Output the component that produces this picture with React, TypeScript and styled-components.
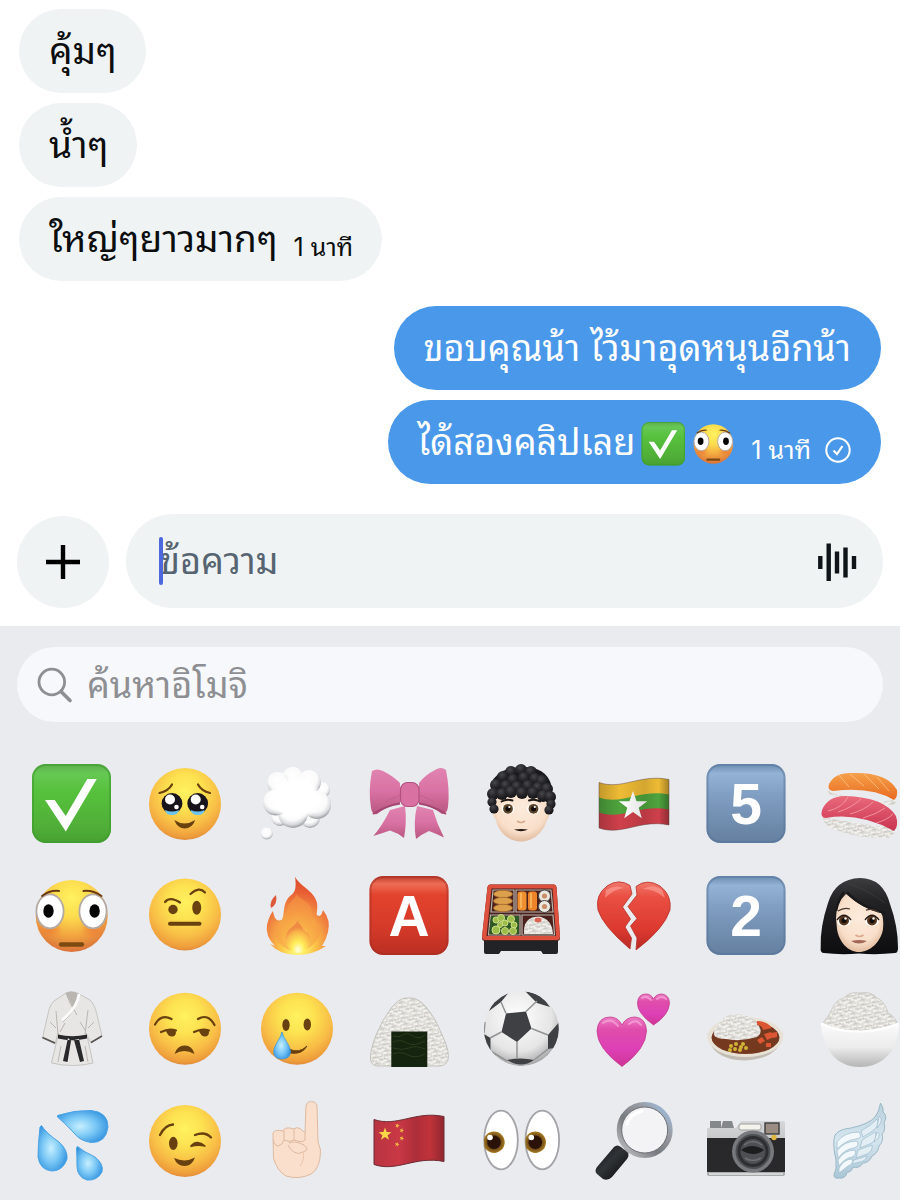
import React from 'react';
import styled, { createGlobalStyle } from 'styled-components';

const GlobalStyle = createGlobalStyle`
  *, *::before, *::after { box-sizing: border-box; }
  body {
    margin: 0;
    background: #ffffff;
    font-family: Inter, "Noto Sans Thai Looped", "Noto Sans Thai", Loma, "Liberation Sans", sans-serif;
  }
  button, input { font: inherit; }
`;

const Screen = styled.div`
  display: flex;
  flex-direction: column;
  min-height: 100vh;
  overflow: hidden;
`;

const Thread = styled.main`
  display: flex;
  flex-direction: column;
  gap: 25px;
  padding: 9px 19px 0;
`;

const Group = styled.section<{ $mine?: boolean }>`
  display: flex;
  flex-direction: column;
  align-items: ${(p) => (p.$mine ? 'flex-end' : 'flex-start')};
  gap: 10px;
`;

const Bubble = styled.div<{ $mine?: boolean }>`
  display: flex;
  align-items: center;
  gap: 16px;
  height: 84px;
  padding: 0 ${(p) => (p.$mine ? '30px' : '29px')} 0 30px;
  border-radius: 42px;
  white-space: nowrap;
  font-size: ${(p) => (p.$mine ? '36px' : '37px')};
  line-height: 48px;
  color: ${(p) => (p.$mine ? '#ffffff' : '#0b0d0f')};
  background: ${(p) => (p.$mine ? '#4a98e9' : '#eff3f4')};
`;

const MessageText = styled.span`
  display: flex;
  align-items: center;
  gap: 6px;
`;

const InlineEmoji = styled.svg`
  width: 44px;
  height: 44px;
  margin-top: 4px;
`;

const Meta = styled.span`
  display: flex;
  align-items: center;
  gap: 14px;
  padding-top: 16px;
  font-size: 25px;
  line-height: 32px;
`;

const Composer = styled.form`
  display: flex;
  align-items: flex-end;
  gap: 17px;
  padding: 30px 17px 18px;
`;

const RoundButton = styled.button`
  display: grid;
  place-items: center;
  flex: none;
  width: 92px;
  height: 92px;
  padding: 0;
  border: 0;
  border-radius: 50%;
  background: #eff3f4;
`;

const MessageField = styled.div`
  position: relative;
  display: flex;
  align-items: center;
  flex: 1;
  height: 94px;
  padding: 0 26px 0 34px;
  border-radius: 47px;
  background: #eff3f4;
`;

const Caret = styled.span`
  position: absolute;
  left: 33px;
  top: 23px;
  width: 4px;
  height: 48px;
  border-radius: 2px;
  background: #4c68dc;
`;

const TextInput = styled.input<{ $tone: string }>`
  flex: 1;
  min-width: 0;
  height: 60px;
  padding: 0;
  border: 0;
  outline: 0;
  background: transparent;
  font-size: 36px;
  color: #0f1419;
  &::placeholder { color: ${(p) => p.$tone}; opacity: 1; }
`;

const IconButton = styled.button`
  display: grid;
  place-items: center;
  width: 40px;
  height: 40px;
  padding: 0;
  border: 0;
  background: transparent;
`;

const Keyboard = styled.section`
  flex: 1;
  padding: 21px 0 16px;
  overflow: hidden;
  background: #eaebef;
`;

const SearchField = styled.label`
  display: flex;
  align-items: center;
  gap: 14px;
  height: 75px;
  margin: 0 17px;
  padding: 0 20px;
  border-radius: 38px;
  background: #f6f8fc;
`;

const EmojiGrid = styled.div`
  display: grid;
  grid-template-columns: repeat(8, 1fr);
  grid-auto-rows: 112px;
  margin: 26px -15px 0 15px;
`;

const EmojiButton = styled.button`
  display: grid;
  place-items: center;
  padding: 0;
  border: 0;
  background: transparent;
`;

const EmojiSvg = styled.svg`
  width: 80px;
  height: 80px;
  overflow: visible;
`;

const SharedDefs = styled.svg`
  position: absolute;
  width: 0;
  height: 0;
`;

type Stop = [number, string];
const stops = (list: Stop[]) => list.map(([o, c]) => <stop key={o} offset={o} stopColor={c} />);

function Defs() {
  const vertical = (id: string, list: Stop[]) => (
    <linearGradient id={id} x1="0" y1="0" x2="0" y2="1">{stops(list)}</linearGradient>
  );
  const radial = (id: string, cx: number, cy: number, r: number, list: Stop[]) => (
    <radialGradient id={id} cx={cx} cy={cy} r={r}>{stops(list)}</radialGradient>
  );
  return (
    <SharedDefs aria-hidden="true">
      <defs>
        {radial('face', 0.5, 0.33, 0.68, [[0, '#fff160'], [0.35, '#fde250'], [0.7, '#f8bd46'], [0.92, '#ee9d3b'], [1, '#dd873b']])}
        {radial('flushed', 0.5, 0.25, 0.76, [[0, '#fff160'], [0.35, '#fcdc4e'], [0.68, '#f3a740'], [1, '#d9703a']])}
        {radial('blush', 0.5, 0.5, 0.5, [[0, '#ee7a35c0'], [1, '#ee7a3500']])}
        {vertical('green', [[0, '#5fae4d'], [0.12, '#66c854'], [0.35, '#56c13c'], [0.8, '#50ae38'], [1, '#47a030']])}
        {vertical('blue', [[0, '#6c8cb0'], [0.12, '#93b2d4'], [0.4, '#809ec2'], [1, '#647f9f']])}
        {vertical('red', [[0, '#b93a2b'], [0.1, '#ee6d55'], [0.24, '#e2432d'], [0.65, '#d53a29'], [1, '#b92f22']])}
        {vertical('heart', [[0, '#f1786c'], [0.22, '#e94f42'], [0.7, '#dc392f'], [1, '#b82a25']])}
        {vertical('pinkHeart', [[0, '#ee7dc5'], [0.25, '#e04dab'], [0.65, '#dd40b6'], [1, '#cf3494']])}
        {radial('puff', 0.46, 0.36, 0.62, [[0, '#ffffff'], [0.62, '#fafafb'], [0.85, '#dadbde'], [1, '#a3a5aa']])}
        {radial('core', 0.5, 0.5, 0.5, [[0, '#ffffff'], [0.75, '#ffffff'], [1, '#ffffff00']])}
        {radial('curl', 0.4, 0.3, 0.7, [[0, '#48474c'], [0.5, '#29282c'], [1, '#131316']])}
        {radial('skin', 0.5, 0.4, 0.62, [[0, '#fdebdc'], [0.7, '#f9dfca'], [1, '#deb79a']])}
        {vertical('bow', [[0, '#e184b1'], [0.5, '#d972a4'], [1, '#b9567f']])}
        {radial('fire', 0.5, 0.88, 0.85, [[0, '#ffffd0'], [0.14, '#fff16a'], [0.32, '#fbc548'], [0.56, '#f28e42'], [0.8, '#e95f35'], [1, '#dd4a2c']])}
        {radial('flame', 0.5, 0.9, 0.7, [[0, '#ffffe0'], [0.35, '#ffee5a'], [0.8, '#f9b54a'], [1, '#f08b45']])}
        {radial('water', 0.45, 0.5, 0.62, [[0, '#c6efff'], [0.5, '#79c7f5'], [1, '#2c8edd']])}
        {vertical('hair', [[0, '#3d3d3f'], [0.3, '#232325'], [1, '#0d0d0f']])}
        {radial('ball', 0.45, 0.35, 0.65, [[0, '#ffffff'], [0.7, '#e5e5e6'], [1, '#a9a9ab']])}
        {vertical('bowl', [[0, '#fbfbfb'], [0.55, '#ececec'], [1, '#b5b5b5']])}
        {vertical('silver', [[0, '#d5d7d9'], [1, '#a7a9ab']])}
        {vertical('wing', [[0, '#b9d0dc'], [0.5, '#d6e6ef'], [1, '#a9c5d4']])}
        {vertical('tuna', [[0, '#ea6a7b'], [1, '#c93350']])}
        {vertical('salmon', [[0, '#f5a14b'], [1, '#e8691f']])}
        {radial('iris', 0.5, 0.5, 0.5, [[0, '#2b1208'], [0.58, '#2b1208'], [0.68, '#76501a'], [1, '#a97c22']])}
        <linearGradient id="chinaRed">{stops([[0, '#b83440'], [0.35, '#c93845'], [0.6, '#ad2e39'], [0.8, '#c13239'], [1, '#8e2730']])}</linearGradient>
        <linearGradient id="wave">{stops([[0, '#00000030'], [0.3, '#00000000'], [0.65, '#0000001c'], [0.85, '#00000000'], [1, '#00000050']])}</linearGradient>
        <linearGradient id="ring" x1="1" y1="0" x2="0" y2="1">{stops([[0, '#9fc4ee'], [0.3, '#9a9da3'], [0.6, '#777a7f'], [1, '#c7c9cc']])}</linearGradient>
        <linearGradient id="handle" x1="0" y1="0" x2="1" y2="1">{stops([[0, '#0b0c0e'], [0.45, '#303438'], [1, '#050606']])}</linearGradient>
        <clipPath id="ballEdge"><circle cx="40.3" cy="40.7" r="37.5" /></clipPath>
        <pattern id="grain" width="12" height="11" patternUnits="userSpaceOnUse" patternTransform="rotate(-12)">
          <rect width="12" height="11" fill="#dfddd8" />
          <path d="M0 2q2-2 4 0M6 1q2 2 4 1M2 5q2 2 4 0M8 5q1-2 4 0M0 8q2 1 3-1M5 8q2-2 4 1M9 10l3-2" stroke="#f6f5f2" strokeWidth="1.7" fill="none" />
          <path d="M1 3q2-1 4 1M6 3q2 2 5 0M0 6q3 2 5 1M7 7q2-1 4 0M2 10q2-1 4 0" stroke="#b4b1aa" strokeWidth=".7" fill="none" />
        </pattern>
      </defs>
    </SharedDefs>
  );
}

const brown = '#69400f';
const Head = ({ cy = 40 }: { cy?: number }) => <circle cx="41" cy={cy} r="36" fill="url(#face)" />;

const Check = () => (
  <>
    <rect x="1" width="79" height="79" rx="14" fill="url(#green)" />
    <rect x="2" y="1" width="77" height="77" rx="13" fill="none" stroke="#3e9b2f" strokeWidth="2" opacity=".6" />
    <path d="M14 36h9.7l11 16L56.3 15h9.5L34.8 67.4z" fill="#fff" />
  </>
);

const Flushed = () => (
  <>
    <circle cx="40.7" cy="40" r="36" fill="url(#flushed)" />
    <ellipse cx="19" cy="54" rx="13" ry="9" fill="url(#blush)" />
    <ellipse cx="62" cy="54" rx="13" ry="9" fill="url(#blush)" />
    <ellipse cx="19" cy="35.3" rx="13.6" ry="17" fill="#fff" stroke="#b3a9a2" strokeWidth="1.8" />
    <ellipse cx="62" cy="35.3" rx="13.6" ry="17" fill="#fff" stroke="#b3a9a2" strokeWidth="1.8" />
    <ellipse cx="17.5" cy="35" rx="5.2" ry="6.8" fill="#050505" />
    <ellipse cx="63.6" cy="35" rx="5.2" ry="6.8" fill="#050505" />
    <path d="M11 20q8-6 17-5M52.5 15q9-1 18 5" fill="none" stroke="#6b3a10" strokeWidth="2" strokeLinecap="round" />
    <path d="M30 68.5h21" stroke="#7d4a12" strokeWidth="4.3" strokeLinecap="round" />
  </>
);

const HoldingTears = () => (
  <>
    <Head />
    {[28, 53.7].map((x) => (
      <g key={x}>
        <circle cx={x} cy="39.5" r="10.4" fill="#17151b" />
        <path d={`M${x - 7} 46q7 3 14 0q-1 5-7 5t-7-5`} fill="#6cc4ee" />
        <circle cx={x - 2} cy="35.5" r="5" fill="#fff" />
        <circle cx={x + 4.5} cy="43" r="2.3" fill="#fff" />
      </g>
    ))}
    <path d="M15.5 29q9-2 12.5-8.5M54 20.5Q57.5 27 66 29" fill="none" stroke={brown} strokeWidth="2.2" strokeLinecap="round" />
    <path d="M30.3 56q10 7 21 0Q48 64.5 40.7 64.5T30.3 56" fill={brown} />
  </>
);

const Thought = () => (
  <>
    {[[66, 26, 8], [24, 53, 9], [54, 54, 10], [37, 14, 11], [22, 19, 11], [53, 18, 12], [37, 49, 15], [61, 41, 14], [20, 38.5, 13]].map(([x, y, r]) => (
      <circle key={`${x}-${y}`} cx={x} cy={y} r={r} fill="url(#puff)" />
    ))}
    <ellipse cx="39" cy="34" rx="28" ry="23" fill="url(#core)" />
    <circle cx="10.7" cy="69.5" r="6" fill="url(#puff)" />
  </>
);

const Bow = () => (
  <>
    <path d="M21 46Q13 62 4.3 72Q14 69 21 66.5Q29 69 35 74Q38 58 36 42zM48 42Q44 58 47 75Q53 70 60 67Q68 70 75 73.5Q68 60 64 46z" fill="url(#bow)" />
    <path d="M3 7Q8 4 14 7Q24 12 31 19V39Q18 42 8 50Q3 51 2 44Q-1 27 3 7M77 6Q72 2 66 6Q56 11 50 19V39Q63 42 73 50Q78 50 79 43Q81 26 77 6" fill="url(#bow)" />
    <path d="M16 38Q24 33 32 31M66 38Q58 33 49 31" fill="none" stroke="#c2628f" strokeWidth="1.2" />
    <path d="M4 50Q16 42 31 39.5M77 50Q65 42 50 39.5" fill="none" stroke="#a44672" strokeWidth="1.8" />
    <rect x="31.5" y="18.5" width="18.5" height="24" rx="7" fill="#d971a3" stroke="#b3527f" strokeWidth="1.2" />
  </>
);

const curls = [
  [30, 8], [40, 6], [50, 8], [22, 13], [32, 16], [43, 14], [54, 15], [61, 17], [15, 21], [25, 22], [36, 23], [47, 22], [57, 24], [66, 25],
  [12, 30], [21, 30], [30, 28], [41, 29], [52, 29], [62, 32], [69, 33], [11, 38], [70, 40], [13, 45], [68, 46],
];

const CurlyPerson = () => (
  <>
    <path d="M12 44Q9 20 40 21Q71 20 69 44Q69 52 66 56C63 68 52 77.5 40 77.5S17 68 15 56Q12 53 12 44" fill="url(#skin)" />
    <path d="M10 20Q16 4 40 3T70 20L69 33Q55 25 40 26T12 33z" fill="#19191c" />
    {curls.map(([x, y]) => <circle key={`${x}-${y}`} cx={x} cy={y} r={y > 35 ? 4.6 : 6} fill="url(#curl)" />)}
    {[27, 52.5].map((x) => (
      <g key={x}>
        <ellipse cx={x} cy="44.8" rx="6.5" ry="5.3" fill="#fff" />
        <circle cx={x} cy="44.8" r="4.9" fill="#5c452b" />
        <circle cx={x} cy="44.8" r="2.6" fill="#100c09" />
        <circle cx={x + 1.3} cy="43" r="1.1" fill="#fff" />
      </g>
    ))}
    <path d="M20.5 37.5q5-3 11-1M48 36.5q6-2 11 1" fill="none" stroke="#1c1816" strokeWidth="1.9" strokeLinecap="round" />
    <path d="M36 57q4 3 8 0" fill="none" stroke="#d9a98c" strokeWidth="1.6" />
    <path d="M33 65.5q7-1 14 0q-7 3.5-14 0" fill="#231613" />
  </>
);

const star = (cx: number, cy: number, outer: number, inner = outer * 0.4, turn = 0) =>
  Array.from({ length: 10 }, (_, i) => {
    const a = -Math.PI / 2 + (i * Math.PI) / 5 + turn;
    const r = i % 2 ? inner : outer;
    return `${(cx + r * Math.cos(a)).toFixed(2)},${(cy + r * Math.sin(a)).toFixed(2)}`;
  }).join(' ');

const band = (y: number, h: number) =>
  `M5 ${y}C28 ${y + 8} 46 ${y - 9} 75 ${y - 3}V${y + h - 3}C46 ${y + h - 9} 28 ${y + h + 8} 5 ${y + h}z`;

const Myanmar = () => (
  <>
    <path d={band(18.5, 16)} fill="#eebb35" />
    <path d={band(33.5, 16)} fill="#4fa43e" />
    <path d={band(48.5, 15.5)} fill="#cf404b" />
    <polygon points={star(39, 42, 15)} fill="#fff" />
    <path d={band(18.5, 45.5)} fill="url(#wave)" stroke="#59403c" strokeWidth=".8" strokeOpacity=".6" />
  </>
);

const China = () => (
  <>
    <path d={band(19.5, 45)} fill="url(#chinaRed)" stroke="#6c2b34" strokeWidth="1" />
    <polygon points={star(16, 34.3, 6.8)} fill="#fbd648" />
    {[[28.3, 25.7], [32.7, 30.5], [32.7, 38.3], [28, 44.3]].map(([x, y]) => <polygon key={y} points={star(x, y, 2.5, 1, 0.3)} fill="#f3bd42" />)}
  </>
);

const Tile = ({ glyph, tone }: { glyph: string; tone: 'blue' | 'red' }) => (
  <>
    <rect x="0.5" y="0" width="79" height="79" rx="14" fill={`url(#${tone})`} />
    <rect x="1.5" y="1" width="77" height="77" rx="13" fill="none" stroke={tone === 'blue' ? '#56749a' : '#a62e23'} strokeWidth="2" opacity=".5" />
    <text x="40" y="59.5" textAnchor="middle" fontFamily="Liberation Sans, sans-serif" fontWeight="700" fontSize="57" fill="#fff">{glyph}</text>
  </>
);

const Sushi = () => (
  <>
    <path d="M9 25Q18 34 42 33Q66 42 76 34L77 39Q72 44 60 39L12 31Q8 29 9 25" fill="url(#grain)" />
    <path d="M10 20Q16 8 34 9Q68 8 78 26Q79 33 75 36Q52 22 14 27Q8 26 10 20" fill="url(#salmon)" />
    <path d="M20 11l10 12M31 10l14 12M45 10l15 15M58 13l12 14" stroke="#ffc67f" strokeWidth="1" opacity=".8" />
    <path d="M4 53Q5 63 14 65Q40 75 68 74Q76 72 76 64Q38 60 4 53" fill="url(#grain)" />
    <path d="M3 46Q9 32 26 32Q65 33 77 52Q80 62 75 67Q40 48 7 54Q1 54 3 46" fill="url(#tuna)" />
    <path d="M9 47Q23 44 29 33M19 48Q32 44 42 35M31 50Q46 46 54 38M44 54Q58 50 66 44M57 59Q68 56 74 50" fill="none" stroke="#f5a1ac" strokeWidth="1" opacity=".8" />
  </>
);

const Skeptical = () => (
  <>
    <Head cy={38.5} />
    <circle cx="29" cy="33.5" r="4.7" fill={brown} />
    <ellipse cx="52.7" cy="31.8" rx="4.5" ry="7" fill={brown} />
    <path d="M21 26q5-6 15 .5M46.5 18q9-8 14.5-1.5" fill="none" stroke={brown} strokeWidth="2.2" strokeLinecap="round" />
    <path d="M26 47.8h29.5" stroke={brown} strokeWidth="4" strokeLinecap="round" />
  </>
);

const Fire = () => (
  <>
    <path d="M39 .5C43 10 58 14 61 27C62 35 60 37 61 39C65 42 66 37 67 34Q75 44 72 56Q70 64 66 70L70 70Q57 79 41 79Q24 79 14 68L19 70Q9 60 11 49Q13 40 17 35C18 41 20 46 25.5 44C29 41 26 29 33 21C38 17 41 15 39 .5" fill="url(#fire)" />
    <path d="M40 18C40 24 30 26 31 37C31 47 24 51 20 49C16 56 20 73 41 76C62 72 66 57 64 48C59 52 54 48 56 39C58 27 46 25 40 18" fill="#f59a46" opacity=".55" />
    <path d="M41 45C38 52 34 50 31 57C27 67 34 77 42 77C54 76 57 65 52 57C48 57 46 49 41 45" fill="url(#flame)" />
    <path d="M20 19Q22 28 15 32Q13 25 20 19" fill="#de583a" />
  </>
);

const Bento = () => (
  <>
    <path d="M3 62H77V76Q77 78 75 78H62L60 75H20L18 78H5Q3 78 3 76z" fill="#222326" />
    <path d="M9 8.5H73Q75 8.5 75.5 11L79 62Q79 65 76 65H4Q1 65 1 62L6.5 11Q7 8.5 9 8.5" fill="#4a211c" />
    <path d="M9 8.5H73Q75 8.5 75.5 11L79 60Q79 64 76 64H4Q1 64 1 60L6.5 11Q7 8.5 9 8.5M10.5 12.5L5.5 60H75L71.5 12.5z" fill="#dc503d" fillRule="evenodd" />
    <path d="M12 14H33V36H10zM35 14H70L72 36H35zM9.5 39H39V59H7.5zM41 39H72L73.5 59H41z" fill="#4c211b" stroke="#b9b5b0" strokeWidth="1.2" />
    {[18, 25, 32].map((y) => <ellipse key={y} cx="22" cy={y} rx="9.5" ry="3.7" fill="#dca04d" stroke="#a5682c" strokeWidth=".8" />)}
    <rect x="36.5" y="15.5" width="9" height="19" rx="3" fill="#ef9030" />
    <rect x="47" y="15.5" width="9" height="19" rx="3" fill="#ee8429" />
    <path d="M40 17v15M50 17v15" stroke="#f9be67" strokeWidth="1.5" />
    {[20, 30.5].map((y) => (
      <g key={y}>
        <circle cx="63.5" cy={y} r="6" fill="#ebe8e2" stroke="#44423d" />
        <circle cx="63.5" cy={y} r="2.6" fill="#c98f69" />
      </g>
    ))}
    <path d="M10 40H38V58H8z" fill="#2f5a25" />
    {[[15, 44, 3], [20, 42, 3.5], [30, 43, 3.5], [24, 47, 3], [33, 49, 3], [15, 54, 4], [24, 55, 3.5], [32, 55, 3.5], [19, 49, 2.5]].map(([x, y, r]) => (
      <circle key={`${x}${y}`} cx={x} cy={y} r={r} fill="#9cbd4a" stroke="#cfdf86" />
    ))}
    <path d="M43 58Q42 41 57 40.5Q71 42 72 58z" fill="url(#grain)" />
    <ellipse cx="57" cy="44" rx="3.5" ry="2.5" fill="#da6354" />
  </>
);

const BrokenHeart = () => (
  <>
    <path d="M36 9.5Q25 2 13 10Q1 19 4 34Q9 50 36 73L37.5 62L31 51L36.5 43L28.5 31L38 18z" fill="url(#heart)" stroke="#b6332c" strokeWidth=".8" />
    <path d="M42 10.5Q53 2 66 10Q78 19 76 34Q70 53 42 74L43 62L36.5 50L43 42.5L34 30.5L43 19z" fill="url(#heart)" stroke="#b6332c" strokeWidth=".8" />
    <path d="M12 14Q21 8 30 12Q20 13 11 22zM49 13Q59 7 68 14L71 22Q61 13 49 13" fill="#ffaaa0" opacity=".55" />
  </>
);

const Woman = () => (
  <>
    <path d="M5 77Q1 77 1.7 71Q1 51 9 27Q16 3 41 2Q64 2 71 28Q79 50 79 72Q79 77 76 77Q58 79 40 77.5Q21 79 5 77" fill="url(#hair)" />
    <path d="M17 42Q17 27 27 18Q44 33 62 37Q65 41 64 53C62 66 51 76 40 76S20 66 18 53z" fill="url(#skin)" />
    <path d="M28 16Q42 32 67 37M25 16Q19 24 17 35" fill="none" stroke="#19191b" strokeWidth="2.5" />
    <path d="M28 7Q49 14 66 27" stroke="#4b4b4d" strokeWidth="1" fill="none" opacity=".4" />
    {[25, 53].map((x) => (
      <g key={x}>
        <ellipse cx={x} cy="44.5" rx="7" ry="5.7" fill="#fff" />
        <circle cx={x} cy="44.5" r="5" fill="#57351c" />
        <circle cx={x} cy="44.5" r="2.6" fill="#100c09" />
        <circle cx={x + 1.5} cy="42.5" r="1.2" fill="#fff" />
        <path d={`M${x - 7} 44Q${x} 34.5 ${x + 7} 44`} fill="none" stroke="#231813" strokeWidth="1.3" />
      </g>
    ))}
    <path d="M19 35q6-4 12-2M47 34q7-2 12 2" fill="none" stroke="#4a3930" strokeWidth="1.3" />
    <path d="M36.5 59q4 3 8 0" fill="none" stroke="#dba98d" strokeWidth="1.7" />
    <path d="M32 65q8-2 16 0q-8 5-16 0" fill="#a3685a" />
  </>
);

const Gi = () => (
  <>
    <path d="M35 5Q41 2 48 6L59 12Q64 17 66 27L71 48L60 55L55 45L57 52L62 75Q42 80 20.5 75L26 52L27 45L24 56L11.5 50L17 26Q19 14 26 11z" fill="#e7e6e4" stroke="#bdbbb8" strokeWidth=".8" />
    <path d="M35 5L42 20L48 6Q41 2 35 5" fill="#b9b5b0" />
    <path d="M35 5Q38 15 46 27M49 6Q46 21 32 34M25 23L27 46M57 22L54 46M19 34l6 6M63 34l-6 6M34 35l-5 9M49 34l5 8M30 58l-3 16M54 58l3 16" fill="none" stroke="#b3b0ac" strokeWidth=".9" />
    <path d="M48 6Q47 19 31 32" fill="none" stroke="#fafafa" strokeWidth="3" />
    <path d="M11.5 49.5l12.5 5.5M71 48l-11 6.5" stroke="#55524f" strokeWidth="1.5" />
    <path d="M27 46.5Q41 50 56 46.5V50.5Q41 54 27 50.5zM37 50L32 73L36.5 74L40 53zM43 52L49 74L53 73L48 51z" fill="#29282a" />
  </>
);

const Unamused = () => (
  <>
    <Head cy={40.7} />
    <path d="M11 36.5q6-11 16.5-5.5M54 31q10-6 16.5 6" fill="none" stroke={brown} strokeWidth="2.2" strokeLinecap="round" />
    <path d="M17 44q8-4 15-1.5M50 44q8-4 15-1.5" fill="none" stroke={brown} strokeWidth="2.2" strokeLinecap="round" />
    <path d="M22 43q6-2 10 .5q0 5-4 5t-6-5.5M55 43q6-2 10 .5q0 5-4 5t-6-5.5" fill={brown} />
    <path d="M30.5 66Q33 57.5 40.7 57.5T50.5 66Q40 60 30.5 66" fill={brown} />
  </>
);

const SmilingTear = () => (
  <>
    <Head cy={40.7} />
    <ellipse cx="30" cy="37" rx="3.7" ry="6" fill={brown} />
    <ellipse cx="51.3" cy="36.5" rx="3.7" ry="6" fill={brown} />
    <path d="M33 61Q43 66 51 58Q46 67 34 65z" fill={brown} stroke={brown} strokeWidth="1" strokeLinejoin="round" />
    <path d="M26 44C28 52 34.5 57 34.5 64Q34 71 26 71T17.7 64C17.7 57 24 52 26 44" fill="url(#water)" stroke="#3994dc" strokeWidth=".7" />
  </>
);

const Onigiri = () => (
  <>
    <path d="M40 10Q49 9 57 19Q66 29 74 49Q81 64 79 72Q77 79 66 78H12Q2 79 1.5 71Q1 62 7 47Q14 30 23 19Q31 9 40 10" fill="url(#grain)" stroke="#bdbab4" strokeWidth=".8" />
    <rect x="22.3" y="43.5" width="36" height="35.5" fill="#15240f" />
    <path d="M24 48q6 2 10-1t10 1 12-1M24 54q8-3 14 1t18-2M24 60q9 3 16 0t16 1M24 66q8-3 15 1t17-1" fill="none" stroke="#2a3d1c" strokeWidth="1" />
  </>
);

const Soccer = () => (
  <g clipPath="url(#ballEdge)">
    <circle cx="40.3" cy="40.7" r="37.5" fill="url(#ball)" />
    <path d="M25 25.5L45 23.5L50.5 40.5L36 54L20.5 44zM44 3Q60 5 69 19L56 15zM29 3Q13 9 8 23L20 14zM79 33Q80 46 73 60L67 61V47zM1 45Q3 56 9.5 65V50zM26 72Q40 69 53 72Q40 81 26 72" fill="#3e4043" />
    <path d="M25 25.5L20 14M45 23.5L56 13M50.5 40.5L67 47M36 54V71M20.5 44L9 50M9.5 63L26 73M53 72L67 61M3 45L4 34" fill="none" stroke="#929395" strokeWidth="1.5" />
  </g>
);

const TwoHearts = () => (
  <>
    <path d="M28 78.5Q3 60 3 43Q4 29 16 29Q24 29 28 37Q32 29 41 29Q52 30 52.5 43Q52 61 28 78.5" fill="url(#pinkHeart)" stroke="#c13c8e" strokeWidth=".8" />
    <path d="M59.5 37Q43 25 43.5 15Q44 6 52 6Q57 6 59.5 11Q62 6 68 6Q75 7 75.5 15Q75 27 59.5 37" fill="url(#pinkHeart)" stroke="#c13c8e" strokeWidth=".8" />
    <path d="M9 35Q17 29 24 38M35 36Q42 30 47 37M48 10Q53 7 57 12M63 11Q68 7 72 11" fill="none" stroke="#f7b6dd" strokeWidth="2" strokeLinecap="round" opacity=".6" />
  </>
);

const Curry = () => (
  <>
    <path d="M1.5 45Q4 72 39 72.5Q74 71 77 45z" fill="#c2bdb3" />
    <ellipse cx="39.3" cy="49" rx="38" ry="20" fill="#e8e2d6" />
    <ellipse cx="39.5" cy="49.5" rx="34" ry="16.5" fill="#74391f" />
    <path d="M8 47Q7 41 13 36Q18 26 33 26Q48 28 53 38Q57 45 51 49Q35 54 20 51Q10 51 8 47" fill="url(#grain)" />
    <path d="M51 33Q61 33 66 40L57 42Q56 37 51 37zM58 46l7-2 3 5-7 3zM51 52l5-3 3 4-5 3zM60 55l5 0 0 4-5 0zM65 45l6-1 0 5-4 1z" fill="#db5733" />
    {[[25, 58], [30, 56], [35, 59], [29, 61], [37, 56], [40, 60], [34, 62], [24, 62]].map(([x, y]) => <circle key={`${x}${y}`} cx={x} cy={y} r="2" fill="#cfb336" />)}
  </>
);

const RiceBowl = () => (
  <>
    <path d="M3 36Q10 28 14 19Q17 12 25 10Q31 3 41 5Q52 3 58 10Q66 13 69 25Q78 30 78 36Q60 44 39 43T3 36" fill="url(#grain)" stroke="#bfbcb6" strokeWidth=".6" />
    <path d="M1.7 35Q20 44 41 43.5T80 35C80 61 65 79 41 79S4 61 1.7 35" fill="url(#bowl)" />
    <path d="M2 35.5Q20 44 41 43.5T79.5 35.5" fill="none" stroke="#ffffff" strokeWidth="2" />
  </>
);

const Drops = () => (
  <g fill="url(#water)" stroke="#4aa3e4" strokeWidth="1">
    <path d="M26.5 15.5Q43 10 60 10.5Q77 12 77 27Q75 43 60 42.5Q49 41 43 33Q34 23 26.5 17z" />
    <path d="M10.5 25.5Q15 33 28 42Q37 50 36 59Q32 71 21 71Q9 70 7 57Q7 45 9 27z" />
    <path d="M46.5 46.5Q53 52 64 57Q73 64 71 72Q66 81 56 80Q46 77 46 66Q46 56 45.5 48z" />
  </g>
);

const Wink = () => (
  <>
    <Head cy={41} />
    <ellipse cx="29.3" cy="43.3" rx="4.3" ry="6.6" fill={brown} />
    <path d="M46.5 46.5Q53 39 61 46Q54 44 46.5 46.5" fill={brown} stroke={brown} strokeWidth="1.6" strokeLinejoin="round" />
    <path d="M16 35q5-10 13-10.5M51 35q10-4 16 2.5" fill="none" stroke={brown} strokeWidth="2.3" strokeLinecap="round" />
    <path d="M30 58Q41 63 51 57.5Q48 66 40.5 66T30 58" fill={brown} />
  </>
);

const Finger = () => (
  <g fill="#f9dfcc" stroke="#dfb99f" strokeWidth="1">
    <path d="M49 33L50 6Q51 1.5 55.5 1.5T61 6L62 42Q66 50 64 58Q62 70 55 74Q43 80 30 76Q21 71 17.5 58L17 33Q19 29 27 31Q29 26 38 29Q42 25 49 33" />
    <path d="M17 39Q18 45 22 46Q27 45 28 40V31M28 40Q33 43 38 40V29M38 40Q46 43 49 40V31M33 43Q39 40 48 45Q54 50 47 52Q42 55 38 52Q34 50 32 45" />
    <path d="M47 52Q49 60 44 66" fill="none" stroke="#ecc5aa" />
  </g>
);

const Eyes = () => (
  <>
    {[20, 61.3].map((x, i) => (
      <g key={x}>
        <clipPath id={`eye${i}`}><ellipse cx={x} cy="40" rx="17" ry="29.5" /></clipPath>
        <ellipse cx={x} cy="40" rx="16.8" ry="29.3" fill="#fff" stroke="#a3a3a8" strokeWidth="1.8" />
        <g clipPath={`url(#eye${i})`}>
          <circle cx={x - 7} cy="42.3" r="10.7" fill="url(#iris)" />
          <circle cx={x - 11} cy="37.5" r="2.8" fill="#fff" />
        </g>
      </g>
    ))}
  </>
);

const Magnifier = () => (
  <>
    <path d="M33 47l4 4-6 6-4-4z" fill="#8c8f94" />
    <path d="M20 47Q23 44 27 47L33 52Q36 55 33 59L18 77Q14 81 9 79L3 74Q0 71 3 67z" fill="url(#handle)" />
    <circle cx="50.7" cy="30" r="25.5" fill="#f3f3f5" stroke="url(#ring)" strokeWidth="5" />
    <circle cx="50.7" cy="30" r="23" fill="none" stroke="#6e7176" strokeWidth="1" />
    <path d="M33 24Q36 14 48 11" stroke="#fff" strokeWidth="3" fill="none" strokeLinecap="round" />
  </>
);

const Camera = () => (
  <>
    <path d="M4 21h11v7H4zM17 21h9l2 7H15z" fill="#85888b" />
    <path d="M2 28H30L35 21H78Q79 21 79 23V74Q79 76 77 76H3Q1 76 1 74V30Q1 28 2 28" fill="url(#silver)" />
    <path d="M1 38H79V72H1z" fill="#29292b" />
    <rect x="33" y="24" width="22" height="6" rx="2" fill="#f4f3ec" stroke="#8d8f91" strokeWidth=".8" />
    <rect x="59" y="23" width="14" height="11" fill="#9b8c84" stroke="#3c3c3e" strokeWidth="1.4" />
    <circle cx="47" cy="51.5" r="21" fill="#77797c" />
    <circle cx="47" cy="51.5" r="16.5" fill="#2c2e30" stroke="#4c4f52" strokeWidth="2" />
    <circle cx="47" cy="51.5" r="12.5" fill="#4d5053" />
    <path d="M35 50Q46 42 58 50Q48 58 35 50" fill="#1c1d1f" />
    <path d="M38 45Q47 38 56 45M39 58Q47 63 55 58" fill="none" stroke="#6c6f73" strokeWidth="1.5" />
    <circle cx="68" cy="37.5" r="2.7" fill="#dfb73e" />
    <path d="M3 74h74" stroke="#e5e5e6" strokeWidth="1.5" />
  </>
);

const Wing = () => (
  <>
    <path d="M61.5 3Q65 8 64 12Q69 16 65 23Q67 30 63 34Q65 41 60 46Q59 53 53 56Q50 63 44 63Q40 69 34 67Q32 73 28 72Q27 79 20 78Q15 79 15 75Q18 69 17 60Q13 43 16 35Q20 29 32 28Q50 24 56 17Q60 12 61.5 3" fill="url(#wing)" stroke="#93b3c4" strokeWidth=".9" />
    <g fill="#f2f8fb" stroke="#a4c1cf" strokeWidth=".8">
      <path d="M18 42Q25 32 40 32Q44 38 37 39Q27 40 18 49z" />
      <path d="M18 51Q25 41 38 41Q41 46 35 48Q26 49 19 58z" />
      <path d="M19 60Q25 50 36 50Q38 55 33 57Q26 58 20 66z" />
      <path d="M20 68Q25 59 33 59Q35 64 29 66L20 73z" />
      <path d="M42 31Q53 25 58 19Q61 24 55 30L44 37zM43 40L56 32Q59 38 53 43L41 48zM39 50L53 45Q54 51 48 54L37 58zM35 60L48 56Q46 62 40 62L33 64z" fill="#e2eef4" />
      <path d="M60 16Q64 18 61 24L58 28zM58 32Q62 33 59 39L55 42z" fill="#e2eef4" />
    </g>
  </>
);

const emojis: { label: string; art: React.ReactNode }[] = [
  { label: 'เครื่องหมายถูก', art: <Check /> },
  { label: 'หน้ากลั้นน้ำตา', art: <HoldingTears /> },
  { label: 'กรอบความคิด', art: <Thought /> },
  { label: 'โบว์', art: <Bow /> },
  { label: 'คนผมหยิก', art: <CurlyPerson /> },
  { label: 'ธงเมียนมา', art: <Myanmar /> },
  { label: 'เลขห้า', art: <Tile glyph="5" tone="blue" /> },
  { label: 'ซูชิ', art: <Sushi /> },
  { label: 'หน้าเขิน', art: <Flushed /> },
  { label: 'หน้าเลิกคิ้ว', art: <Skeptical /> },
  { label: 'ไฟ', art: <Fire /> },
  { label: 'กรุ๊ปเลือดเอ', art: <Tile glyph="A" tone="red" /> },
  { label: 'ข้าวกล่อง', art: <Bento /> },
  { label: 'หัวใจสลาย', art: <BrokenHeart /> },
  { label: 'เลขสอง', art: <Tile glyph="2" tone="blue" /> },
  { label: 'ผู้หญิง', art: <Woman /> },
  { label: 'ชุดคาราเต้', art: <Gi /> },
  { label: 'หน้าไม่พอใจ', art: <Unamused /> },
  { label: 'ยิ้มทั้งน้ำตา', art: <SmilingTear /> },
  { label: 'ข้าวปั้น', art: <Onigiri /> },
  { label: 'ฟุตบอล', art: <Soccer /> },
  { label: 'หัวใจสองดวง', art: <TwoHearts /> },
  { label: 'ข้าวแกงกะหรี่', art: <Curry /> },
  { label: 'ข้าวสวย', art: <RiceBowl /> },
  { label: 'หยดน้ำ', art: <Drops /> },
  { label: 'ขยิบตา', art: <Wink /> },
  { label: 'ชี้ขึ้น', art: <Finger /> },
  { label: 'ธงจีน', art: <China /> },
  { label: 'ดวงตา', art: <Eyes /> },
  { label: 'แว่นขยาย', art: <Magnifier /> },
  { label: 'กล้อง', art: <Camera /> },
  { label: 'ปีก', art: <Wing /> },
];

export default function App() {
  return (
    <Screen>
      <GlobalStyle />
      <Defs />
      <Thread>
        <Group>
          <Bubble>คุ้มๆ</Bubble>
          <Bubble>น้ำๆ</Bubble>
          <Bubble>
            <MessageText>ใหญ่ๆยาวมากๆ</MessageText>
            <Meta>1 นาที</Meta>
          </Bubble>
        </Group>
        <Group $mine>
          <Bubble $mine>ขอบคุณน้า ไว้มาอุดหนุนอีกน้า</Bubble>
          <Bubble $mine>
            <MessageText>
              ได้สองคลิปเลย
              <InlineEmoji viewBox="0 0 80 80" aria-label="เครื่องหมายถูก"><Check /></InlineEmoji>
              <InlineEmoji viewBox="0 0 80 80" aria-label="หน้าเขิน"><Flushed /></InlineEmoji>
            </MessageText>
            <Meta>
              1 นาที
              <svg width="26" height="26" viewBox="0 0 26 26" fill="none" stroke="#fff" strokeWidth="2" aria-label="ส่งแล้ว">
                <circle cx="13" cy="13" r="11.7" />
                <path d="M8.5 13.5l3.5 3.5 5.5-8" strokeWidth="2.2" />
              </svg>
            </Meta>
          </Bubble>
        </Group>
      </Thread>
      <Composer onSubmit={(e) => e.preventDefault()}>
        <RoundButton type="button" aria-label="เพิ่ม">
          <svg width="34" height="34" viewBox="0 0 34 34" stroke="#000" strokeWidth="4.4" aria-hidden="true">
            <path d="M17 0v34M0 17h34" />
          </svg>
        </RoundButton>
        <MessageField>
          <Caret />
          <TextInput $tone="#566370" type="text" aria-label="ข้อความ" placeholder="ข้อความ" />
          <IconButton type="button" aria-label="ข้อความเสียง">
            <svg width="40" height="40" viewBox="0 0 40 40" stroke="#0f1419" strokeWidth="4.4" aria-hidden="true">
              <path d="M3.3 15v13M11.7 2.5v37.5M20 10.5v22M28.5 6.5v30M37 15v13" />
            </svg>
          </IconButton>
        </MessageField>
      </Composer>
      <Keyboard>
        <SearchField>
          <svg width="36" height="36" viewBox="0 0 36 36" fill="none" stroke="#8e8f93" strokeWidth="2.8" strokeLinecap="round" aria-hidden="true">
            <circle cx="14.8" cy="15" r="12.8" />
            <path d="M24 24.5l9 9" strokeWidth="3.6" />
          </svg>
          <TextInput $tone="#8e8f93" type="search" aria-label="ค้นหาอิโมจิ" placeholder="ค้นหาอิโมจิ" />
        </SearchField>
        <EmojiGrid>
          {emojis.map(({ label, art }) => (
            <EmojiButton key={label} type="button" aria-label={label}>
              <EmojiSvg viewBox="0 0 80 80" aria-hidden="true">{art}</EmojiSvg>
            </EmojiButton>
          ))}
        </EmojiGrid>
      </Keyboard>
    </Screen>
  );
}
